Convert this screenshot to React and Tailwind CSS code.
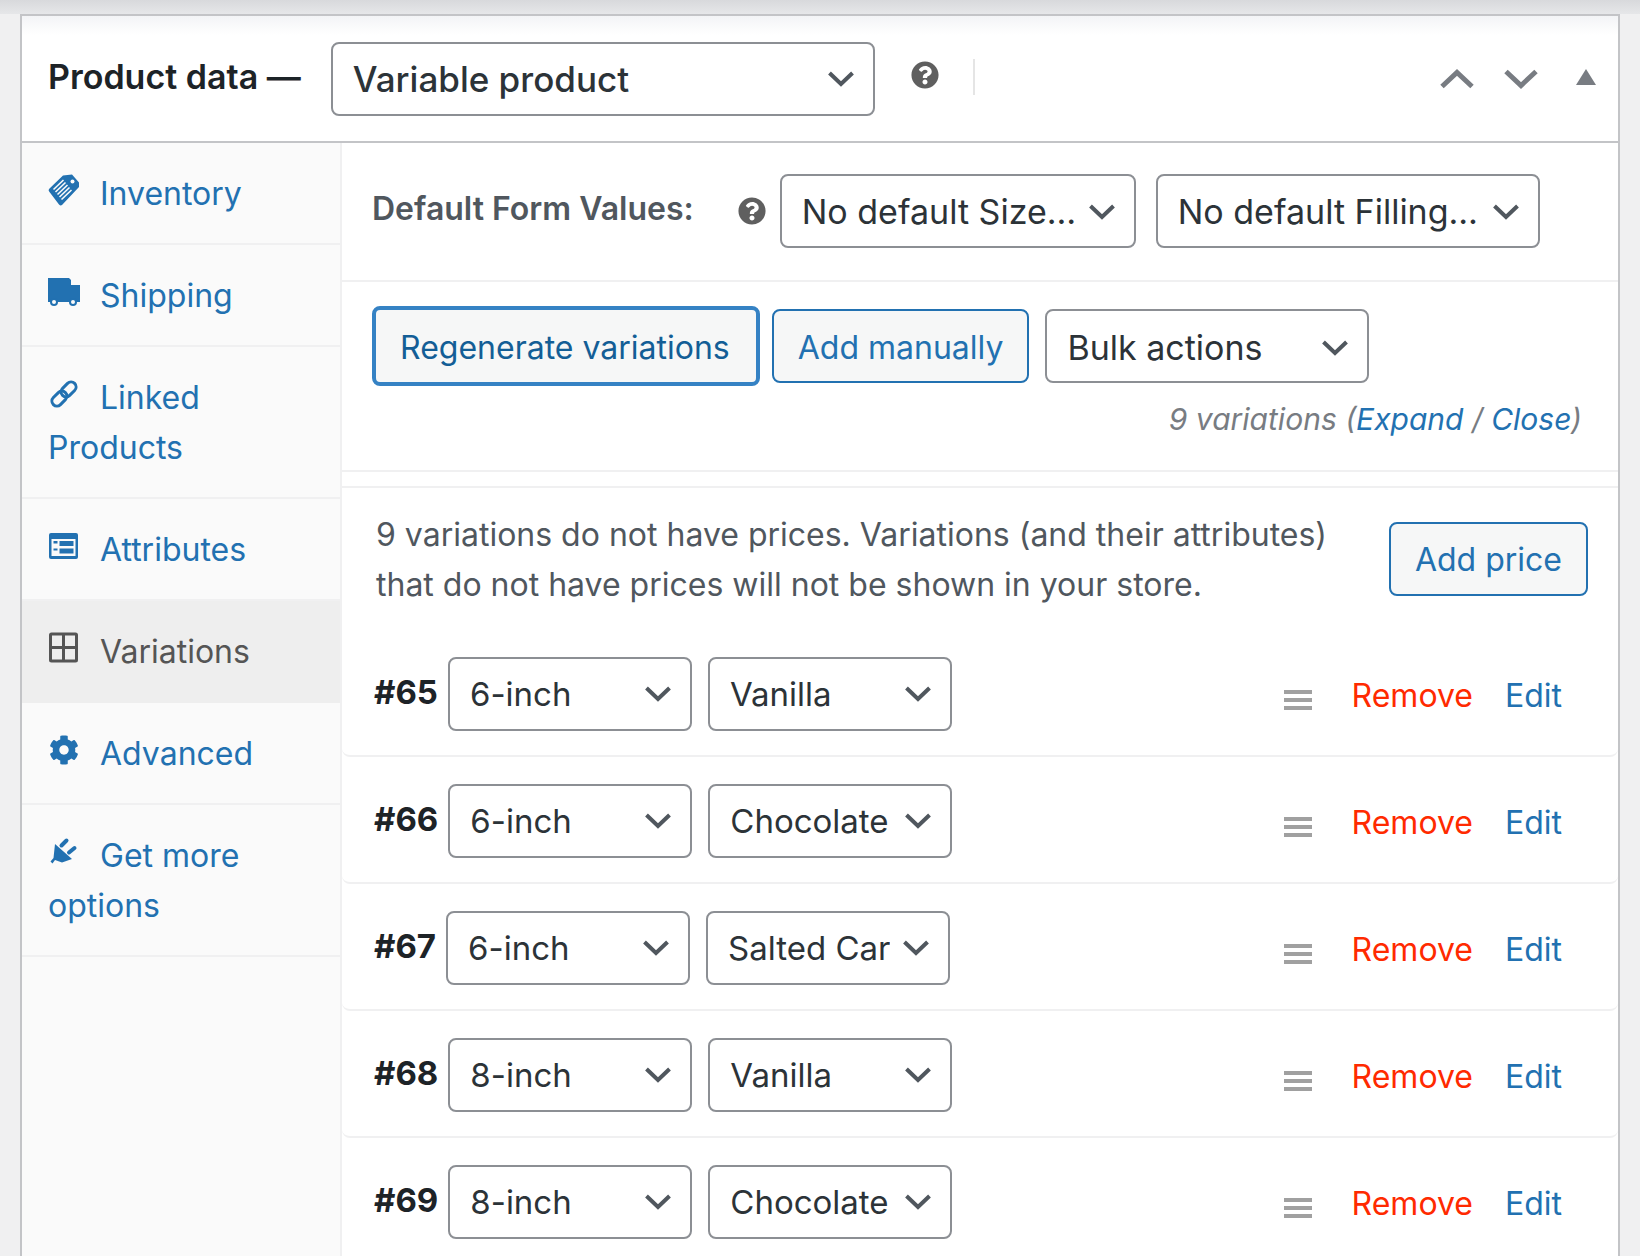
import React from "react";
import { FaCog, FaQuestionCircle } from "react-icons/fa";

const Chevron = ({ className = "" }) => (
  <svg viewBox="0 0 27 16" className={"w-7 h-4 shrink-0 fill-none stroke-[#50575e] " + className}>
    <polyline points="2,2 13.5,13 25,2" strokeWidth="4" />
  </svg>
);

const Select = ({ label, className = "", medium = false }) => (
  <div className={"flex items-center h-18.5 shrink-0 border-2 border-[#8c8f94] rounded-lg bg-white pl-5 pr-4.5 text-[#2c3338] " + (medium ? "font-medium " : "") + className}>
    <span className="flex-1 min-w-0 overflow-hidden whitespace-nowrap">{label}</span>
    <Chevron className="ml-3" />
  </div>
);

const iconCls = "inline-block w-8 h-8 mr-5 -translate-y-1.5 align-middle";

const TagIcon = () => (
  <svg viewBox="0 0 32 32" className={iconCls}>
    <path fill="#2271b1" d="M1 15 L15 1.5 L24 0.5 L31 8.5 L31 13 L14 31 Q12.5 32 11 30.5 L1.5 18 Q0 16.5 1 15 Z" />
    <g stroke="#fafafa" strokeWidth="1.6">
      <path d="M5.5 15.5 L15.5 6" />
      <path d="M7.5 18 L17.5 8.5" />
      <path d="M9.5 20.5 L19.5 11" />
      <path d="M11.5 23 L21.5 13.5" />
      <path d="M13.5 25.5 L23.5 16" />
    </g>
    <circle cx="24.5" cy="7.5" r="2" fill="#fafafa" />
  </svg>
);
const TruckIcon = () => (
  <svg viewBox="0 0 32 32" className={iconCls}>
    <path fill="#2271b1" d="M-1 2 H21 L23 4 V9 H32 V26 H-1 Z" />
    <circle cx="6" cy="26" r="4" fill="#2271b1" />
    <circle cx="25" cy="26" r="4" fill="#2271b1" />
    <circle cx="6" cy="26" r="2" fill="#fafafa" />
    <circle cx="25" cy="26" r="2" fill="#fafafa" />
  </svg>
);
const LinkIcon = () => (
  <svg viewBox="0 0 32 32" className={iconCls}>
    <g fill="none" stroke="#2271b1" strokeWidth="3" transform="rotate(-45 16 16)">
      <rect x="1" y="11" width="17" height="10" rx="5" />
      <rect x="14" y="11" width="17" height="10" rx="5" />
    </g>
  </svg>
);
const AttrIcon = () => (
  <svg viewBox="0 0 32 32" className={iconCls}>
    <rect x="1" y="3" width="29" height="26" rx="2" fill="#2271b1" />
    <rect x="3.5" y="9" width="24" height="17" fill="#fafafa" />
    <rect x="5.5" y="11" width="4" height="2.5" fill="#2271b1" />
    <rect x="11.5" y="11" width="14" height="5" fill="#2271b1" />
    <rect x="5.5" y="18.5" width="4" height="2" fill="#2271b1" />
    <rect x="11.5" y="18.5" width="14" height="5" fill="#2271b1" />
  </svg>
);
const GridIcon = () => (
  <svg viewBox="0 0 32 32" className={iconCls}>
    <rect x="2.5" y="2" width="26" height="27" rx="1" fill="none" stroke="#555" strokeWidth="3" />
    <path d="M15.5 2 V29 M2.5 15.5 H28.5" stroke="#555" strokeWidth="3" />
  </svg>
);
const PlugIcon = () => (
  <svg viewBox="48 835 32 32" className={iconCls}>
    <path fill="#2271b1" d="M55 843 L72 858 L62 861.5 L55 859 L52.5 862.5 L50.5 860.5 L53.5 857 Z" />
    <path d="M61.5 844.5 L66.5 839.5 M69 851.5 L74.5 847" stroke="#2271b1" strokeWidth="4" strokeLinecap="round" />
  </svg>
);

const Tab = ({ icon, label, active }) => (
  <div className={"block pl-6.5 pr-4 pt-6.5 pb-6 border-b-2 " + (active ? "bg-[#eeeeee] text-[#555555] border-[#eeeeee]" : "text-[#2271b1] border-[#f0f0f1]")}>
    {icon}
    {label}
  </div>
);

const rows = [
  ["#65", "6-inch", "Vanilla"],
  ["#66", "6-inch", "Chocolate"],
  ["#67", "6-inch", "Salted Caramel"],
  ["#68", "8-inch", "Vanilla"],
  ["#69", "8-inch", "Chocolate"],
];

export default function App() {
  return (
    <div className="h-screen overflow-hidden bg-[#f0f0f1] font-['Inter',sans-serif] text-[32px] leading-12.5 text-[#50575e]">
      <div className="h-3.5 bg-linear-to-b from-[#d8d9dc] to-[#e6e7e9]" />
      <div className="mx-5 border-2 border-[#c3c4c7] border-b-0 bg-white min-h-screen">
        <div className="flex items-center pl-6.5 pr-5.5 pt-6.5 pb-6.25 border-b-2 border-[#c3c4c7] bg-linear-to-b from-gray-100 to-white to-15%">
          <span className="text-[34px] font-semibold text-[#1d2327] whitespace-nowrap mr-7.5 -translate-y-0.5">Product data —</span>
          <Select label="Variable product" medium className="w-136 text-[35px]" />
          <FaQuestionCircle className="w-7 h-7 ml-9 text-[#5f5f5f] -translate-y-1" />
          <div className="w-0.5 h-9 bg-[#e5e5e5] ml-8.5 -translate-y-0.5" />
          <div className="ml-auto flex items-center gap-7.5">
            <svg viewBox="0 0 34 19" className="w-8.5 h-5 fill-none stroke-[#787c82]">
              <polyline points="2,17 17,3 32,17" strokeWidth="5" />
            </svg>
            <svg viewBox="0 0 34 19" className="w-8.5 h-5 fill-none stroke-[#787c82]">
              <polyline points="2,2 17,16 32,2" strokeWidth="5" />
            </svg>
            <svg viewBox="0 0 20 16" className="w-5 h-4 ml-2 fill-[#787c82] -translate-y-0.5">
              <polygon points="10,0 20,16 0,16" />
            </svg>
          </div>
        </div>
        <div className="flex">
          <div className="w-80 shrink-0 bg-[#fafafa] border-r-2 border-[#f0f0f1]">
            <Tab icon={<TagIcon />} label="Inventory" />
            <Tab icon={<TruckIcon />} label="Shipping" />
            <Tab icon={<LinkIcon />} label="Linked Products" />
            <Tab icon={<AttrIcon />} label="Attributes" />
            <Tab icon={<GridIcon />} label="Variations" active />
            <Tab
              icon={<FaCog className={iconCls + " text-[#2271b1] p-px"} />}
              label="Advanced"
            />
            <Tab icon={<PlugIcon />} label="Get more options" />
          </div>
          <div className="flex-1 min-w-0">
            <div className="flex items-center pl-7.5 pt-7.75 pb-8 border-b-2 border-[#f0f0f1]">
              <span className="font-semibold whitespace-nowrap mr-11 -translate-y-0.5">Default Form Values:</span>
              <FaQuestionCircle className="w-7 h-7 mr-3.5 text-[#5f5f5f]" />
              <Select label="No default Size…" className="w-89 mr-5 pt-0.5 text-[34px]" />
              <Select label="No default Filling…" className="w-96 pt-0.5 text-[34px]" />
            </div>
            <div className="pt-6 pb-6.5 pl-7.5 pr-9 border-b-2 border-[#f0f0f1] mb-3.5">
              <div className="flex items-center gap-3">
                <div className="h-20 flex items-center pl-6 pr-6.5 pt-1 border-4 border-[#3582c4] rounded-lg bg-[#f6f7f7] text-[#135e96] whitespace-nowrap">
                  Regenerate variations
                </div>
                <div className="h-18.5 flex items-center px-6 pt-1 border-2 border-[#2271b1] rounded-lg bg-[#f6f7f7] text-[#2271b1] whitespace-nowrap">
                  Add manually
                </div>
                <Select label="Bulk actions" className="w-81 ml-1 pt-1 text-[34px]" />
              </div>
              <div className="mt-2 text-right italic text-3xl leading-12.5 text-[#787c82]">
                9 variations (<span className="text-[#2271b1]">Expand</span> / <span className="text-[#2271b1]">Close</span>)
              </div>
            </div>
            <div className="border-t-2 border-[#f0f0f1]">
              <div className="flex items-start justify-between gap-8 pt-5.5 pb-5.25 pl-8.5 pr-7.5">
                <p>9 variations do not have prices. Variations (and their attributes) that do not have prices will not be shown in your store.</p>
                <div className="mt-3 h-18.5 shrink-0 flex items-center px-6 pt-0.5 border-2 border-[#2271b1] rounded-lg bg-[#f6f7f7] text-[#2271b1] whitespace-nowrap">
                  Add price
                </div>
              </div>
              {rows.map(([id, size, filling]) => (
                <div key={id} className="flex items-center pt-6.5 pb-6 pl-8 pr-14 mb-px border-b-2 border-[#f0f0f1] rounded-b-lg">
                  <span className="text-[33px] font-bold text-[#1d2327] mr-2.5 -translate-y-0.5">{id}</span>
                  <Select label={size} className="w-61 mr-4 text-[33px]" />
                  <Select label={filling} className="w-61 text-[33px]" />
                  <div className="ml-auto flex items-center pt-1">
                    <div className="flex flex-col gap-1 mr-10 translate-y-1">
                      <div className="w-7 h-1 bg-[#a0a0a0]" />
                      <div className="w-7 h-1 bg-[#a0a0a0]" />
                      <div className="w-7 h-1 bg-[#a0a0a0]" />
                    </div>
                    <span className="text-[#ff2a00] mr-8">Remove</span>
                    <span className="text-[#2271b1]">Edit</span>
                  </div>
                </div>
              ))}
            </div>
          </div>
        </div>
      </div>
    </div>
  );
}
